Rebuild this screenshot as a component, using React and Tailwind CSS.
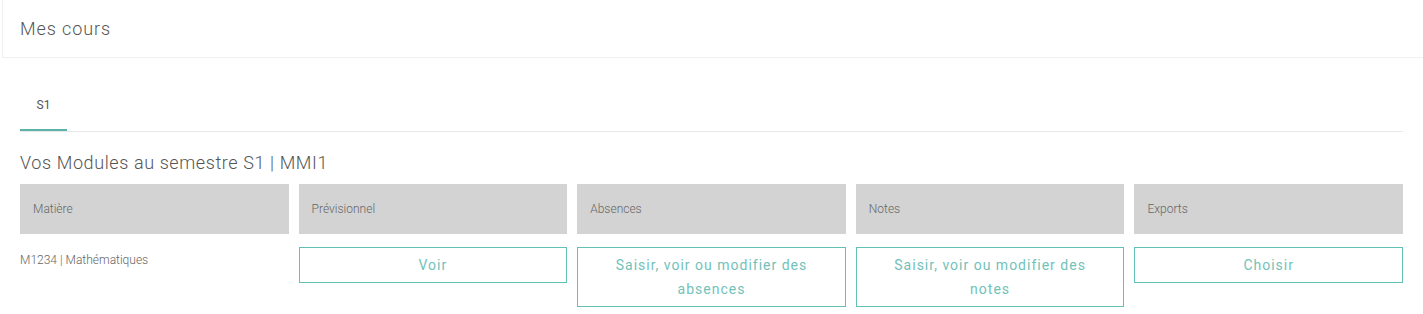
import React from "react";

const headers = ["Matière", "Prévisionnel", "Absences", "Notes", "Exports"];

function Btn({ children }) {
  return (
    <button className="w-full border border-[#62c0b5] bg-white px-4 py-[5px] text-center text-[14px] leading-[24px] tracking-[1px] text-[#72c2b9]">
      {children}
    </button>
  );
}

export default function App() {
  return (
    <div className="min-h-[314px] w-full bg-white text-[#444]" style={{ fontFamily: "Roboto, 'Liberation Sans', sans-serif" }}>
      <div className="ml-[2px] flex h-[58px] items-center border-b border-l border-[#f0f0f0] px-[17px]">
        <h1 className="text-[18px] font-light leading-[24px] text-[#555] tracking-[0.9px]">Mes cours</h1>
      </div>
      <div className="px-[20px] pt-[22px]">
        <div className="flex h-[52px] border-b border-[#e8e8e8]">
          <div className="flex w-[47px] items-center justify-center border-b-2 border-[#5cb4a9] pt-[1px] text-[12px] text-[#555]">
            S1
          </div>
        </div>
        <h2 className="mt-[19px] text-[18px] font-light leading-[24px] text-[#555] tracking-[0.6px]">
          Vos Modules au semestre S1 | MMI1
        </h2>
        <div className="mt-[9px] grid grid-cols-5 gap-x-[10px] gap-y-[13px]">
          {headers.map((h) => (
            <div key={h} className="flex h-[50px] items-center bg-[#d3d3d3] pl-[13px] text-[12px] font-light text-[#666]">
              {h}
            </div>
          ))}
          <div className="mt-[3px] text-[12px] font-light leading-[20px] text-[#666]">M1234 | Mathématiques</div>
          <div><Btn>Voir</Btn></div>
          <div><Btn>Saisir, voir ou modifier des absences</Btn></div>
          <div><Btn>Saisir, voir ou modifier des notes</Btn></div>
          <div><Btn>Choisir</Btn></div>
        </div>
      </div>
    </div>
  );
}
